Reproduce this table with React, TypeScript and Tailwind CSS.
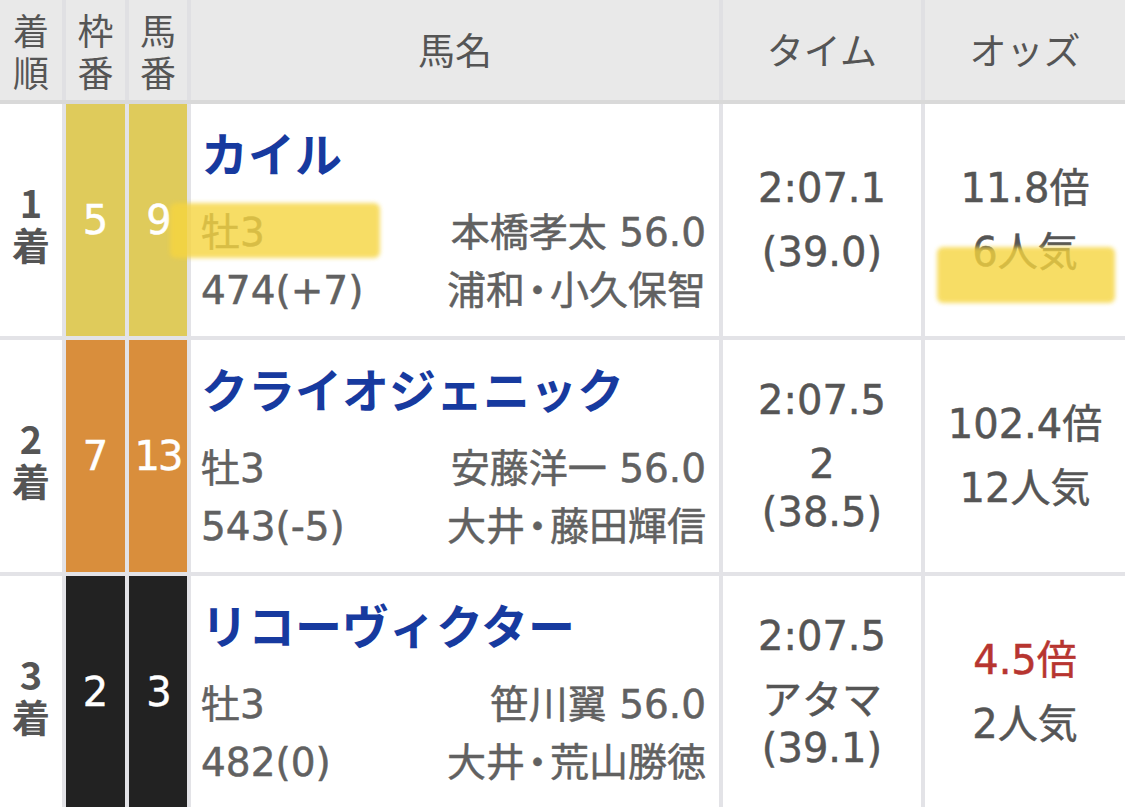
import React from "react";

const FONT = { fontFamily: "'DejaVu Sans', 'Noto Sans CJK JP', sans-serif" };
const CJK = { fontFamily: "'Noto Sans CJK JP', sans-serif" };

type Row = {
  rank: string;
  waku: string;
  uma: string;
  wakuColor: string;
  name: string;
  sex: string;
  weight: string;
  jockey: string;
  trainer: string;
  time: string;
  extra: string[];
  odds: string;
  oddsRed?: boolean;
  pop: string;
};

const rows: Row[] = [
  {
    rank: "1",
    waku: "5",
    uma: "9",
    wakuColor: "bg-[#dfcb5b]",
    name: "カイル",
    sex: "牡3",
    weight: "474(+7)",
    jockey: "本橋孝太 56.0",
    trainer: "浦和・小久保智",
    time: "2:07.1",
    extra: ["(39.0)"],
    odds: "11.8倍",
    pop: "6人気",
  },
  {
    rank: "2",
    waku: "7",
    uma: "13",
    wakuColor: "bg-[#d98e3c]",
    name: "クライオジェニック",
    sex: "牡3",
    weight: "543(-5)",
    jockey: "安藤洋一 56.0",
    trainer: "大井・藤田輝信",
    time: "2:07.5",
    extra: ["2", "(38.5)"],
    odds: "102.4倍",
    pop: "12人気",
  },
  {
    rank: "3",
    waku: "2",
    uma: "3",
    wakuColor: "bg-[#222222]",
    name: "リコーヴィクター",
    sex: "牡3",
    weight: "482(0)",
    jockey: "笹川翼 56.0",
    trainer: "大井・荒山勝徳",
    time: "2:07.5",
    extra: ["アタマ", "(39.1)"],
    odds: "4.5倍",
    oddsRed: true,
    pop: "2人気",
  },
];

function Dot({ text }: { text: string }) {
  const parts = text.split("・");
  return (
    <>
      {parts.map((p, i) => (
        <React.Fragment key={i}>
          {i > 0 && <span className="mx-[-7px]">・</span>}
          {p}
        </React.Fragment>
      ))}
    </>
  );
}

const COLS = "grid grid-cols-[62px_59px_58px_528px_198px_1fr] gap-x-[4px]";
const HEAD = "bg-[#e9e9e9] text-[37px] text-[#555]";
const STACK = "bg-[#e9e9e9] text-[36px] leading-[42px] text-[#555] flex items-center justify-center text-center";
const STROKE = "[-webkit-text-stroke:0.5px_currentColor]";

export default function App() {
  return (
    <div className="relative w-[1125px] h-[807px] overflow-hidden bg-[#e3e3e7]" style={FONT}>
      {/* header */}
      <div className={`${COLS} h-[100px] bg-[#e0e0e3]`} style={CJK}>
        <div className={STACK}>
          <p>
            着<br />順
          </p>
        </div>
        <div className={STACK}>
          <p>
            枠<br />番
          </p>
        </div>
        <div className={STACK}>
          <p>
            馬<br />番
          </p>
        </div>
        <div className={`${HEAD} flex items-center justify-center`}>馬名</div>
        <div className={`${HEAD} flex items-center justify-center`}>タイム</div>
        <div className={`${HEAD} flex items-center justify-center`}>オッズ</div>
      </div>
      <div className="h-[4px] bg-[#d9d9d9]" />

      {rows.map((r, i) => (
        <React.Fragment key={i}>
          {i > 0 && <div className="h-[4px] bg-[#e3e3e7]" />}
          <div className={`${COLS} h-[232px]`}>
            <div
              className="bg-white flex items-center justify-center text-center pt-[6px] text-[38px] leading-[42px] font-bold text-[#555]"
              style={CJK}
            >
              <p>
                {r.rank}
                <br />着
              </p>
            </div>
            <div className={`${r.wakuColor} flex items-center justify-center text-[40px] text-white ${STROKE}`}>
              {r.waku}
            </div>
            <div
              className={`${r.wakuColor} flex items-center justify-center text-[40px] text-white tracking-[-2px] ${STROKE}`}
            >
              {r.uma}
            </div>
            <div className="bg-white pt-[20px] pl-[10px] pr-[13px]">
              <div
                className="h-[56px] leading-[56px] text-[47px] font-bold text-[#173a9f] whitespace-nowrap"
                style={CJK}
              >
                {r.name}
              </div>
              <div className={`mt-[24px] text-[39px] leading-[58px] text-[#616161] ${STROKE}`}>
                <div className="flex justify-between whitespace-nowrap">
                  <span>{r.sex}</span>
                  <span>{r.jockey}</span>
                </div>
                <div className="flex justify-between whitespace-nowrap">
                  <span>{r.weight}</span>
                  <span>
                    <Dot text={r.trainer} />
                  </span>
                </div>
              </div>
            </div>
            <div className={`bg-white flex flex-col items-center justify-center text-[40px] text-[#555] ${STROKE}`}>
              <div className="leading-[48px] mb-[16px]">{r.time}</div>
              {r.extra.map((e, j) => (
                <div key={j} className="leading-[48px]">
                  {e}
                </div>
              ))}
            </div>
            <div className={`bg-white flex flex-col items-center justify-center text-[40px] text-[#555] ${STROKE}`}>
              <div className={`leading-[48px] mb-[16px] ${r.oddsRed ? "text-[#b73530]" : ""}`}>{r.odds}</div>
              <div className="leading-[48px]">{r.pop}</div>
            </div>
          </div>
        </React.Fragment>
      ))}

      {/* highlighter marks */}
      <div className="absolute left-[170px] top-[203px] w-[210px] h-[55px] rounded-[6px] bg-[#f6d53f] opacity-80 blur-[2px]" />
      <div className="absolute left-[937px] top-[247px] w-[178px] h-[56px] rounded-[6px] bg-[#f6d53f] opacity-80 blur-[2px]" />
    </div>
  );
}
